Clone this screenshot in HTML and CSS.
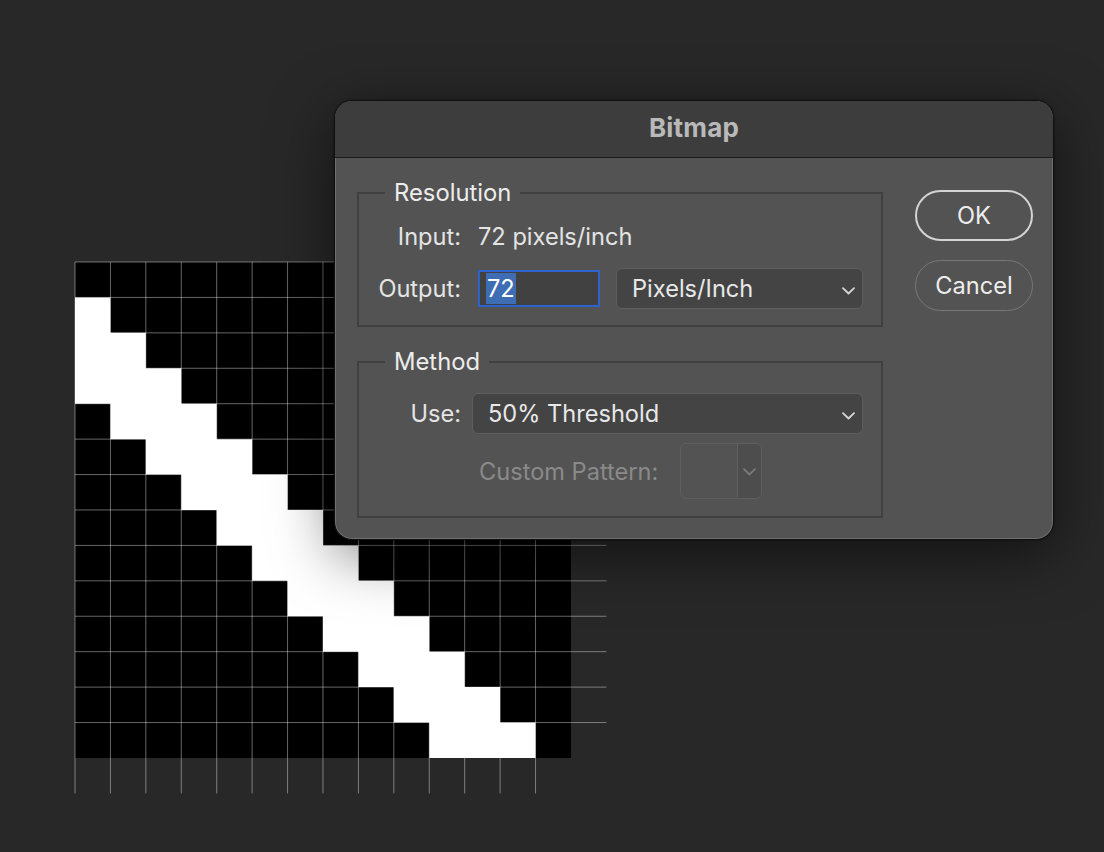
FILE: index.html
```html
<!DOCTYPE html>
<html lang="en">
<head>
<meta charset="utf-8">
<title>Bitmap</title>
<link rel="stylesheet" href="styles.css">
</head>
<body>
  <main class="workspace">
    <svg class="pixels" width="531.4" height="531.4" viewBox="0 0 15 15" aria-hidden="true">
      <rect x="0" y="0" width="14" height="14" fill="#000"/>
      <polygon fill="#fff" points="0,1 1,1 1,2 2,2 2,3 3,3 3,4 4,4 4,5 5,5 5,6 6,6 6,7 7,7 7,8 8,8 8,9 9,9 9,10 10,10 10,11 11,11 11,12 12,12 12,13 13,13 13,14 10,14 10,13 9,13 9,12 8,12 8,11 7,11 7,10 6,10 6,9 5,9 5,8 4,8 4,7 3,7 3,6 2,6 2,5 1,5 1,4 0,4"/>
      <path class="gridlines" d="M0 0H15M0 1H15M0 2H15M0 3H15M0 4H15M0 5H15M0 6H15M0 7H15M0 8H15M0 9H15M0 10H15M0 11H15M0 12H15M0 13H15M0 0V15M1 0V15M2 0V15M3 0V15M4 0V15M5 0V15M6 0V15M7 0V15M8 0V15M9 0V15M10 0V15M11 0V15M12 0V15M13 0V15"/>
    </svg>
  </main>

  <section class="dialog" role="dialog" aria-label="Bitmap">
    <header class="titlebar">Bitmap</header>
    <div class="dialog-body">
      <div class="groups">
        <fieldset class="group group-resolution">
          <legend>Resolution</legend>
          <div class="row">
            <span class="label">Input:</span>
            <span class="value">72 pixels/inch</span>
          </div>
          <div class="row">
            <span class="label">Output:</span>
            <div class="field field-focused"><span class="selection">72</span></div>
            <div class="select select-unit">
              <span>Pixels/Inch</span>
              <svg class="chevron" width="13" height="8" viewBox="0 0 13 8"><path d="M1 1.2l5.5 5.3 5.5-5.3"/></svg>
            </div>
          </div>
        </fieldset>

        <fieldset class="group group-method">
          <legend>Method</legend>
          <div class="row">
            <span class="label">Use:</span>
            <div class="select select-method">
              <span>50% Threshold</span>
              <svg class="chevron" width="13" height="8" viewBox="0 0 13 8"><path d="M1 1.2l5.5 5.3 5.5-5.3"/></svg>
            </div>
          </div>
          <div class="row row-pattern">
            <span class="label-disabled">Custom Pattern:</span>
            <div class="pattern-picker">
              <div class="pattern-swatch"></div>
              <div class="pattern-arrow">
                <svg class="chevron" width="13" height="8" viewBox="0 0 13 8"><path d="M1 1.2l5.5 5.3 5.5-5.3"/></svg>
              </div>
            </div>
          </div>
        </fieldset>
      </div>

      <div class="buttons">
        <button class="btn btn-default" type="button">OK</button>
        <button class="btn btn-cancel" type="button">Cancel</button>
      </div>
    </div>
  </section>
</body>
</html>
```

FILE: styles.css
```css
html, body {
  margin: 0;
  padding: 0;
}

body {
  position: relative;
  width: 1104px;
  height: 852px;
  overflow: hidden;
  background: #282828;
  font-family: Inter, "Noto Sans", "Liberation Sans", sans-serif;
  color: #e6e6e6;
}

.workspace {
  display: block;
  padding: 262px 0 0 75px;
}

.pixels {
  display: block;
  overflow: visible;
}

.gridlines {
  fill: none;
  stroke: rgba(255, 255, 255, 0.4);
  stroke-width: 1px;
  vector-effect: non-scaling-stroke;
}

/* ---------- dialog ---------- */

.dialog {
  position: absolute;
  left: 334px;
  top: 100px;
  width: 720px;
  height: 440px;
  box-sizing: border-box;
  border: 1px solid #101010;
  border-radius: 18px;
  overflow: hidden;
  background: #535353;
  display: flex;
  flex-direction: column;
  box-shadow: inset 0 0 0 1px rgba(255, 255, 255, 0.16), 0 14px 60px rgba(0, 0, 0, 0.55), 0 0 2px rgba(0, 0, 0, 0.6);
}

.titlebar {
  height: 52px;
  padding-bottom: 4px;
  flex: none;
  background: #3d3d3d;
  border-bottom: 1px solid #1c1c1c;
  display: flex;
  align-items: center;
  justify-content: center;
  font-size: 26px;
  font-weight: 700;
  color: #b9b9b9;
  letter-spacing: 0.2px;
}

.dialog-body {
  flex: 1;
  display: flex;
  padding: 21px 20px 0 22px;
}

.groups {
  width: 526px;
  display: flex;
  flex-direction: column;
  gap: 21px;
}

.group {
  margin: 0;
  min-width: 0;
  border: 2px solid #404040;
  padding: 0 18px 0 0;
}

.group legend {
  margin-left: 26px;
  padding: 0 9px;
  font-size: 23.8px;
  line-height: 28px;
  color: #ececec;
}

.group-resolution {
  padding-top: 9px;
  padding-bottom: 16px;
  display: flex;
  flex-direction: column;
  gap: 11px;
}

.group-method {
  padding-top: 17px;
  padding-bottom: 17px;
  display: flex;
  flex-direction: column;
  gap: 9px;
}

.row {
  display: flex;
  align-items: center;
  height: 41px;
  font-size: 23.6px;
}

.label {
  width: 102px;
  flex: none;
  text-align: right;
  white-space: nowrap;
  color: #e4e4e4;
  margin-right: 17px;
}

.value {
  color: #e4e4e4;
}

.field {
  width: 122px;
  height: 37px;
  box-sizing: border-box;
  border: 2px solid #2c63cf;
  background: #414141;
  display: flex;
  align-items: center;
  padding-left: 6px;
  margin-right: 16px;
}

.selection {
  background: #3e6db3;
  color: #ffffff;
  line-height: 31px;
  padding: 0 1px;
}

.select {
  height: 41px;
  box-sizing: border-box;
  border: 1px solid #5e5e5e;
  border-radius: 6px;
  background: #444444;
  display: flex;
  align-items: center;
  justify-content: space-between;
  padding: 0 7px 0 15px;
  color: #e8e8e8;
}

.select-unit {
  width: 247px;
}

.group-method .label {
  margin-right: 11px;
}

.select-method {
  width: 391px;
}

.chevron {
  display: block;
  margin-top: 4px;
}

.chevron path {
  fill: none;
  stroke: #d6d6d6;
  stroke-width: 1.8;
  stroke-linecap: round;
  stroke-linejoin: round;
}

.row-pattern {
  height: 56px;
  padding-left: 120px;
}

.label-disabled {
  color: #8a8a8a;
  width: 182px;
  flex: none;
  white-space: nowrap;
  margin-right: 19px;
}

.pattern-picker {
  width: 82px;
  height: 56px;
  box-sizing: border-box;
  border: 1.5px solid #5f5f5f;
  border-radius: 6px;
  display: flex;
  overflow: hidden;
}

.pattern-swatch {
  flex: 1;
  border-right: 1.5px solid #5f5f5f;
}

.pattern-arrow {
  width: 23px;
  background: #4d4d4d;
  display: flex;
  align-items: center;
  justify-content: center;
}

.pattern-arrow .chevron {
  margin-top: 2px;
}

.pattern-arrow .chevron path {
  stroke: #7a7a7a;
}

/* ---------- buttons ---------- */

.buttons {
  margin-left: 32px;
  padding-top: 11px;
  display: flex;
  flex-direction: column;
  gap: 19px;
}

.btn {
  width: 118px;
  height: 51px;
  box-sizing: border-box;
  border-radius: 26px;
  background: transparent;
  font-family: inherit;
  font-size: 23.6px;
  color: #ededed;
  padding: 0;
  cursor: default;
}

.btn-default {
  border: 2px solid #d4d4d4;
}

.btn-cancel {
  border: 1.5px solid #787878;
}
```
